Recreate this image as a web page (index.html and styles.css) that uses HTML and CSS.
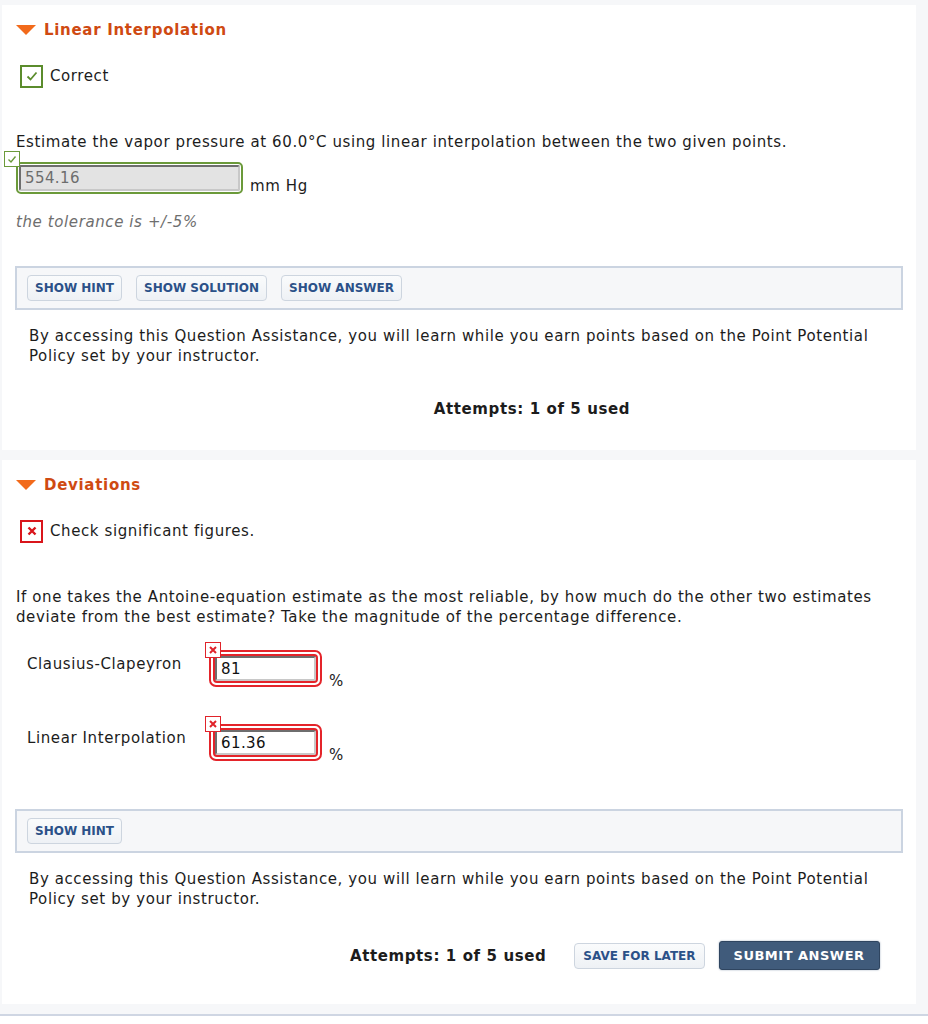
FILE: index.html
```html
<!DOCTYPE html>
<html lang="en">
<head>
    <meta charset="UTF-8">
    <title>Question Parts</title>
    <link rel="stylesheet" href="styles.css">
</head>
<body>
    <div class="part">
        <h2 class="part-title"><span class="caret"></span>Linear Interpolation</h2>
        <div class="feedback">
            <span class="mark ok"><svg width="14" height="14" viewBox="0 0 14 14"><path d="M2.5 7.5 L5.5 10.5 L11.5 3.5" fill="none" stroke="#5b8c2c" stroke-width="1.8"/></svg></span>Correct
        </div>

        <p class="question">Estimate the vapor pressure at 60.0°C using linear interpolation between the two given points.</p>
        <div class="answer-row first">
            <span class="mini ok"><svg width="12" height="12" viewBox="0 0 12 12"><path d="M2.5 6.5 L5 9 L9.5 3.5" fill="none" stroke="#6b9a3a" stroke-width="1.4"/></svg></span>
            <div class="field ok"><input type="text" value="554.16" readonly></div>
            <span class="unit">mm Hg</span>
        </div>
        <p class="tolerance">the tolerance is +/-5%</p>

        <div class="assist">
            <button class="btn-assist">SHOW HINT</button>
            <button class="btn-assist">SHOW SOLUTION</button>
            <button class="btn-assist">SHOW ANSWER</button>
        </div>
        <p class="policy">By accessing this Question Assistance, you will learn while you earn points based on the Point Potential Policy set by your instructor.</p>
        <div class="attempts center">Attempts: 1 of 5 used</div>
    </div>

    <div class="part last">
        <h2 class="part-title"><span class="caret"></span>Deviations</h2>
        <div class="feedback">
            <span class="mark bad"><svg width="14" height="14" viewBox="0 0 14 14"><path d="M3.5 3.5 L10.5 10.5 M10.5 3.5 L3.5 10.5" fill="none" stroke="#d9151b" stroke-width="2.4"/></svg></span>Check significant figures.
        </div>

        <p class="question">If one takes the Antoine-equation estimate as the most reliable, by how much do the other two estimates deviate from the best estimate? Take the magnitude of the percentage difference.</p>
        <div class="pair">
            <label>Clausius-Clapeyron</label>
            <div class="answer-row">
                <span class="mini bad"><svg width="12" height="12" viewBox="0 0 12 12"><path d="M3 3 L9 9 M9 3 L3 9" fill="none" stroke="#e0232a" stroke-width="2"/></svg></span>
                <div class="field bad"><input type="text" value="81"></div>
                <span class="unit low">%</span>
            </div>
        </div>
        <div class="pair">
            <label>Linear Interpolation</label>
            <div class="answer-row">
                <span class="mini bad"><svg width="12" height="12" viewBox="0 0 12 12"><path d="M3 3 L9 9 M9 3 L3 9" fill="none" stroke="#e0232a" stroke-width="2"/></svg></span>
                <div class="field bad"><input type="text" value="61.36"></div>
                <span class="unit low">%</span>
            </div>
        </div>

        <div class="assist second">
            <button class="btn-assist">SHOW HINT</button>
        </div>
        <p class="policy">By accessing this Question Assistance, you will learn while you earn points based on the Point Potential Policy set by your instructor.</p>
        <div class="submit-row">
            <span class="attempts">Attempts: 1 of 5 used</span>
            <button class="btn-assist save">SAVE FOR LATER</button>
            <button class="btn-submit">SUBMIT ANSWER</button>
        </div>
    </div>
    <div class="footer-line"></div>
</body>
</html>
```

FILE: styles.css
```css
html {
    background-color: #fff;
}
body {
    margin: 0;
    padding: 5px 12px 0 2px;
    background-color: #f6f7f9;
    font-family: "DejaVu Sans", Verdana, sans-serif;
    font-size: 15px;
    letter-spacing: 0.6px;
    color: #1c1c1c;
}
.part {
    background-color: #fff;
    padding: 14px 14px 1px 14px;
    margin-bottom: 10px;
}
.part.last {
    padding-bottom: 34px;
}
.part-title {
    display: flex;
    align-items: center;
    margin: 0;
    font-size: 15px;
    letter-spacing: 0.7px;
    font-weight: bold;
    color: #cf4a12;
    height: 21px;
}
.caret {
    width: 0;
    height: 0;
    border-left: 10px solid transparent;
    border-right: 10px solid transparent;
    border-top: 10px solid #f26a1b;
    margin-right: 8px;
}
.feedback {
    display: flex;
    align-items: center;
    margin: 24px 0 0 4px;
    height: 24px;
}
.mark {
    width: 19px;
    height: 19px;
    display: inline-flex;
    align-items: center;
    justify-content: center;
    margin-right: 7px;
}
.mark.ok {
    border: 2px solid #5b8c2c;
}
.mark.bad {
    border: 2px solid #d9151b;
}
.question {
    margin: 44px 0 0 0;
    line-height: 20px;
}
.answer-row {
    position: relative;
    display: flex;
    align-items: flex-end;
}
.answer-row.first {
    margin-top: 10px;
}
.mini {
    position: absolute;
    width: 14px;
    height: 14px;
    display: flex;
    align-items: center;
    justify-content: center;
    background: #fff;
    z-index: 1;
}
.mini.ok {
    left: -12px;
    top: -11px;
    border: 1px solid #6b9a3a;
}
.mini.bad {
    left: -4px;
    top: -8px;
    border: 1px solid #e0232a;
}
.field {
    border-radius: 5px;
}
.field.ok {
    border: 2px solid #6b9a3a;
    padding: 1px;
}
.field.bad {
    border: 2px solid #e4242a;
    padding: 4px;
    border-radius: 7px;
}
.field input {
    font-family: "DejaVu Sans", Verdana, sans-serif;
    font-size: 15px;
    letter-spacing: 0.4px;
    border: 2px solid #6e6e6e;
    border-right-color: #c8c8c8;
    border-bottom-color: #c8c8c8;
    padding: 0 4px;
    margin: 0;
    outline: none;
    display: block;
    border-radius: 2px;
}
.field.ok input {
    width: 209px;
    height: 22px;
    background-color: #e3e3e3;
    color: #6d6d6d;
}
.field.bad input {
    width: 89px;
    height: 21px;
    background-color: #fff;
    color: #111;
    box-shadow: 0 0 0 2px #e4242a;
}
.unit {
    margin-left: 7px;
    margin-bottom: -1px;
}
.unit.low {
    margin-bottom: -3px;
}
.tolerance {
    margin: 19px 0 0 0;
    font-style: italic;
    color: #6e6e6e;
}
.assist {
    margin: 35px 0 0 -1px;
    width: 864px;
    padding: 7px 10px;
    display: flex;
    gap: 14px;
    background-color: #f6f7f9;
    border: 2px solid #cbd4e1;
    letter-spacing: 0;
}
.assist.second {
    margin-top: 48px;
}
.btn-assist {
    font-family: "DejaVu Sans", Verdana, sans-serif;
    font-size: 12px;
    font-weight: bold;
    color: #2b5188;
    background: linear-gradient(#fafbfc, #eef1f5);
    border: 1px solid #cdd5df;
    border-radius: 4px;
    padding: 0 7px;
    height: 26px;
}
.policy {
    margin: 16px 0 0 13px;
    line-height: 20px;
    width: 880px;
}
.attempts {
    font-weight: bold;
}
.attempts.center {
    text-align: center;
    padding-left: 146px;
    margin: 34px 0 31px 0;
}
.pair {
    display: flex;
    align-items: flex-start;
    margin: 23px 0 0 11px;
}
.pair + .pair {
    margin-top: 37px;
}
.pair label {
    width: 182px;
    margin-top: 5px;
}
.submit-row {
    display: flex;
    align-items: center;
    margin: 32px 0 0 334px;
}
.submit-row .save {
    margin-left: 28px;
    padding: 0 8px;
}
.btn-submit {
    font-family: "DejaVu Sans", Verdana, sans-serif;
    font-size: 13px;
    letter-spacing: 0.5px;
    font-weight: bold;
    color: #fff;
    background-color: #405b7b;
    border: 1px solid #2f4560;
    border-radius: 3px;
    height: 29px;
    padding: 0 14px;
    margin-left: 14px;
    box-shadow: 0 0 2px #9aa8ba;
}
.footer-line {
    height: 2px;
    background-color: #cfd6e3;
    margin: 0 -12px 0 -2px;
}
```
